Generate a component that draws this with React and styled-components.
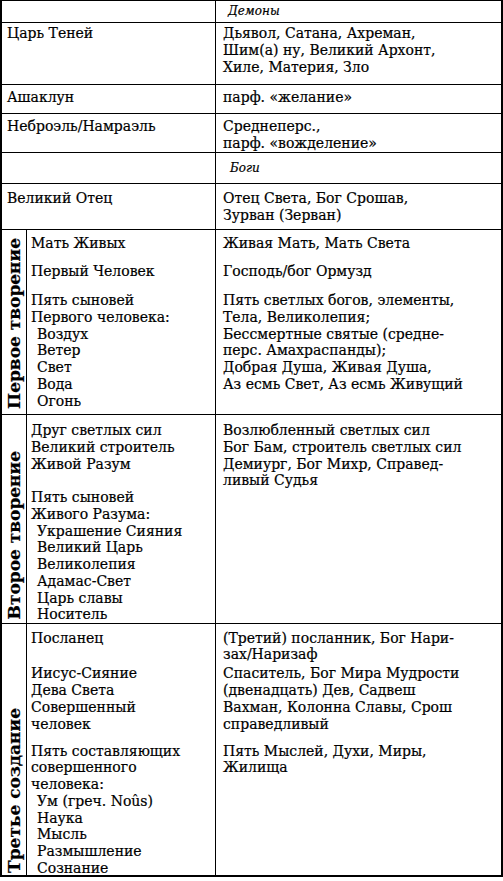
import React from "react";
import styled, { createGlobalStyle } from "styled-components";

const GlobalStyle = createGlobalStyle`
  html, body {
    margin: 0;
    padding: 0;
    background: #fff;
  }
  body {
    font-family: "DejaVu Serif", "Liberation Serif", serif;
    color: #000;
  }
`;

const Page = styled.div`
  width: 503px;
  height: 881px;
  background: #fff;
  overflow: hidden;
`;

const Table = styled.div`
  width: 503px;
  box-sizing: border-box;
  border-top: 1px solid #000;
  border-left: 2px solid #000;
  border-right: 2px solid #000;
  font-size: 14px;
  line-height: 16.75px;
  -webkit-text-stroke: 0.2px #000;
`;

const Row = styled.div`
  display: grid;
  grid-template-columns: 214px 1fr;
  box-sizing: border-box;
  height: ${(p) => p.$h}px;
  border-bottom: 1px solid #000;
`;

const Cell = styled.div`
  box-sizing: border-box;
  padding: ${(p) => p.$pt || 0}px 4px 0 ${(p) => (p.$left ? 5 : 7)}px;
  border-right: ${(p) => (p.$left ? "1px solid #000" : "none")};
  white-space: nowrap;
`;

const HeadCell = styled.div`
  box-sizing: border-box;
  display: flex;
  align-items: center;
  padding-left: ${(p) => p.$indent}px;
  border-right: ${(p) => (p.$left ? "1px solid #000" : "none")};
  font-style: italic;
  font-size: 12px;
`;

const Section = styled.div`
  display: grid;
  grid-template-columns: 25px 189px 1fr;
  grid-template-rows: ${(p) => `repeat(${p.$n - 1}, auto) 1fr`};
  box-sizing: border-box;
  height: ${(p) => p.$h}px;
  border-bottom: ${(p) => (p.$last ? 2 : 1)}px solid #000;
`;

const SideLabel = styled.div`
  grid-column: 1;
  grid-row: 1 / -1;
  display: flex;
  flex-direction: column;
  justify-content: flex-end;
  align-items: center;
  padding-bottom: ${(p) => p.$pb}px;
  border-right: 1px solid #000;
`;

const VerticalText = styled.span`
  writing-mode: vertical-rl;
  transform: rotate(180deg);
  font-weight: 700;
  font-size: 17px;
  line-height: 1;
  white-space: nowrap;
`;

const SubCell = styled.div`
  box-sizing: border-box;
  padding: ${(p) => p.$pt || 0}px 4px ${(p) => p.$pb || 0}px
    ${(p) => (p.$left ? 4 : 7)}px;
  border-right: ${(p) => (p.$left ? "1px solid #000" : "none")};
  white-space: nowrap;
`;

const Line = styled.div`
  padding-left: ${(p) => (p.$sub ? 6 : 0)}px;
`;

const rows = [
  { h: 62, pt: 2, left: ["Царь Теней"], right: ["Дьявол, Сатана, Ахреман,", "Шим(а) ну, Великий Архонт,", "Хиле, Материя, Зло"] },
  { h: 29, pt: 4, left: ["Ашаклун"], right: ["парф. «желание»"] },
  { h: 39, pt: 4, left: ["Неброэль/Намраэль"], right: ["Среднеперс.,", "парф. «вожделение»"] },
];

const sections = [
  {
    label: "Первое творение",
    h: 185,
    pt: 5,
    pb: 5,
    rows: [
      { left: ["Мать Живых"], right: ["Живая Мать, Мать Света"], gap: 11.5 },
      { left: ["Первый Человек"], right: ["Господь/бог Ормузд"], gap: 12 },
      {
        left: ["Пять сыновей", "Первого человека:"],
        sub: ["Воздух", "Ветер", "Свет", "Вода", "Огонь"],
        right: [
          "Пять светлых богов, элементы,",
          "Тела, Великолепия;",
          "Бессмертные святые (средне-",
          "перс. Амахраспанды);",
          "Добрая Душа, Живая Душа,",
          "Аз есмь Свет, Аз есмь Живущий",
        ],
      },
    ],
  },
  {
    label: "Второе творение",
    h: 209,
    pt: 7,
    pb: 4,
    rows: [
      { left: ["Друг светлых сил"], right: ["Возлюбленный светлых сил"] },
      { left: ["Великий строитель"], right: ["Бог Бам, строитель светлых сил"] },
      { left: ["Живой Разум"], right: ["Демиург, Бог Михр, Справед-", "ливый Судья"] },
      {
        left: ["Пять сыновей", "Живого Разума:"],
        sub: ["Украшение Сияния", "Великий Царь", "Великолепия", "Адамас-Свет", "Царь славы", "Носитель"],
        right: [],
      },
    ],
  },
  {
    label: "Третье создание",
    h: 253,
    pt: 5.5,
    pb: 4,
    last: true,
    rows: [
      { left: ["Посланец"], right: ["(Третий) посланник, Бог Нари-", "зах/Наризаф"], gap: 2.25 },
      {
        left: ["Иисус-Сияние", "Дева Света", "Совершенный", "человек"],
        right: ["Спаситель, Бог Мира Мудрости", "(двенадцать) Дев, Садвеш", "Вахман, Колонна Славы, Срош", "справедливый"],
        gap: 10.25,
      },
      {
        left: ["Пять составляющих", "совершенного", "человека:"],
        sub: ["Ум (греч. Noûs)", "Наука", "Мысль", "Размышление", "Сознание"],
        right: ["Пять Мыслей, Духи, Миры,", "Жилища"],
      },
    ],
  },
];

const Lines = ({ items = [], sub = [] }) => (
  <>
    {items.map((t) => (
      <Line key={t}>{t}</Line>
    ))}
    {sub.map((t) => (
      <Line key={t} $sub>
        {t}
      </Line>
    ))}
  </>
);

const TableSection = ({ s }) => (
  <Section $h={s.h} $n={s.rows.length} $last={s.last}>
    <SideLabel $pb={s.pb}>
      <VerticalText>{s.label}</VerticalText>
    </SideLabel>
    {s.rows.map((r, i) => (
      <React.Fragment key={i}>
        <SubCell $left $pt={i === 0 ? s.pt : 0} $pb={r.gap}>
          <Lines items={r.left} sub={r.sub} />
        </SubCell>
        <SubCell $pt={i === 0 ? s.pt : 0} $pb={r.gap}>
          <Lines items={r.right} />
        </SubCell>
      </React.Fragment>
    ))}
  </Section>
);

export default function App() {
  return (
    <Page>
      <GlobalStyle />
      <Table>
        <Row $h={22}>
          <HeadCell $left $indent={5} />
          <HeadCell $indent={12}>Демоны</HeadCell>
        </Row>
        {rows.map((r) => (
          <Row key={r.left[0]} $h={r.h}>
            <Cell $left $pt={r.pt}>
              <Lines items={r.left} />
            </Cell>
            <Cell $pt={r.pt}>
              <Lines items={r.right} />
            </Cell>
          </Row>
        ))}
        <Row $h={31}>
          <HeadCell $left $indent={5} />
          <HeadCell $indent={14}>Боги</HeadCell>
        </Row>
        <Row $h={46}>
          <Cell $left $pt={6}>
            <Lines items={["Великий Отец"]} />
          </Cell>
          <Cell $pt={6}>
            <Lines items={["Отец Света, Бог Срошав,", "Зурван (Зерван)"]} />
          </Cell>
        </Row>
        {sections.map((s) => (
          <TableSection key={s.label} s={s} />
        ))}
      </Table>
    </Page>
  );
}
